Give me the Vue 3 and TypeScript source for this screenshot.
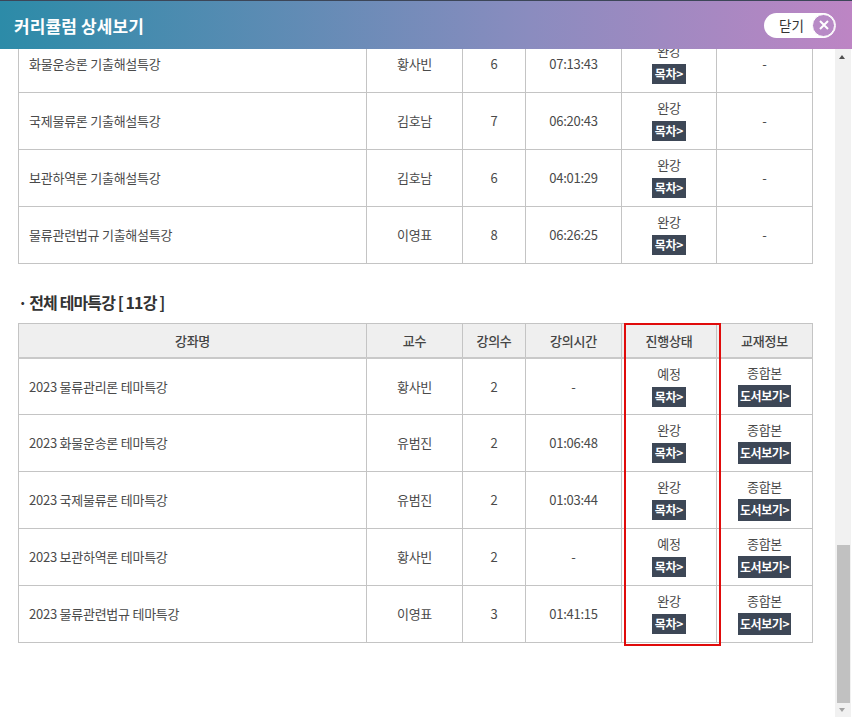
<script setup lang="ts">
interface Lecture {
  title: string
  teacher: string
  count: number
  time: string
  status: string
  book: boolean
}

const specials: Lecture[] = [
  { title: '화물운송론 기출해설특강', teacher: '황사빈', count: 6, time: '07:13:43', status: '완강', book: false },
  { title: '국제물류론 기출해설특강', teacher: '김호남', count: 7, time: '06:20:43', status: '완강', book: false },
  { title: '보관하역론 기출해설특강', teacher: '김호남', count: 6, time: '04:01:29', status: '완강', book: false },
  { title: '물류관련법규 기출해설특강', teacher: '이영표', count: 8, time: '06:26:25', status: '완강', book: false }
]

const themes: Lecture[] = [
  { title: '2023 물류관리론 테마특강', teacher: '황사빈', count: 2, time: '-', status: '예정', book: true },
  { title: '2023 화물운송론 테마특강', teacher: '유범진', count: 2, time: '01:06:48', status: '완강', book: true },
  { title: '2023 국제물류론 테마특강', teacher: '유범진', count: 2, time: '01:03:44', status: '완강', book: true },
  { title: '2023 보관하역론 테마특강', teacher: '황사빈', count: 2, time: '-', status: '예정', book: true },
  { title: '2023 물류관련법규 테마특강', teacher: '이영표', count: 3, time: '01:41:15', status: '완강', book: true }
]

const headers = ['강좌명', '교수', '강의수', '강의시간', '진행상태', '교재정보']
</script>

<template>
  <div class="popup">
    <header class="top">
      <h1>커리큘럼 상세보기</h1>
      <button class="close">
        <span>닫기</span>
        <i class="close-x">
          <svg width="12" height="12" viewBox="0 0 12 12">
            <path d="M2 2l8 8M10 2l-8 8" stroke="#fff" stroke-width="2" fill="none" />
          </svg>
        </i>
      </button>
    </header>

    <main class="body">
      <table class="list first">
        <colgroup>
          <col class="c1" /><col class="c2" /><col class="c3" /><col class="c4" /><col class="c5" /><col class="c6" />
        </colgroup>
        <tbody>
          <tr v-for="row in specials" :key="row.title">
            <td class="title">{{ row.title }}</td>
            <td>{{ row.teacher }}</td>
            <td>{{ row.count }}</td>
            <td>{{ row.time }}</td>
            <td class="stack">
              <div class="status">{{ row.status }}</div>
              <a class="tag">목차&gt;</a>
            </td>
            <td>-</td>
          </tr>
        </tbody>
      </table>

      <h2>· 전체 테마특강 [ 11강 ]</h2>

      <table class="list second">
        <colgroup>
          <col class="c1" /><col class="c2" /><col class="c3" /><col class="c4" /><col class="c5" /><col class="c6" />
        </colgroup>
        <thead>
          <tr>
            <th v-for="h in headers" :key="h">{{ h }}</th>
          </tr>
        </thead>
        <tbody>
          <tr v-for="row in themes" :key="row.title">
            <td class="title">{{ row.title }}</td>
            <td>{{ row.teacher }}</td>
            <td>{{ row.count }}</td>
            <td>{{ row.time }}</td>
            <td class="stack">
              <div class="status">{{ row.status }}</div>
              <a class="tag">목차&gt;</a>
            </td>
            <td class="stack">
              <div class="status">종합본</div>
              <a class="tag book">도서보기&gt;</a>
            </td>
          </tr>
        </tbody>
      </table>

      <div class="highlight"></div>

      <div class="scrollbar">
        <span class="arrow up"></span>
        <div class="track"><div class="thumb"></div></div>
        <span class="arrow down"></span>
      </div>
    </main>
  </div>
</template>

<style>
html,
body {
  margin: 0;
  background: #fff;
}
</style>

<style scoped>
.popup {
  width: 852px;
  height: 724px;
  display: flex;
  flex-direction: column;
  overflow: hidden;
  font-family: "Noto Sans CJK KR", "Noto Sans", sans-serif;
  color: #4a4a4a;
}

.top {
  height: 49px;
  box-sizing: border-box;
  flex: none;
  display: flex;
  align-items: center;
  justify-content: space-between;
  padding: 0 17px 0 14px;
  border-top: 1px solid #3c4658;
  background: linear-gradient(90deg, #2c8ba8 0%, #8a8cbf 62%, #bd85c4 100%);
}

.top h1 {
  margin: 0;
  font-size: 17px;
  font-weight: 700;
  color: #fff;
  letter-spacing: 0.1px;
}

.close {
  width: 71px;
  height: 25px;
  padding: 0 0 0 15px;
  box-sizing: border-box;
  display: flex;
  align-items: center;
  justify-content: space-between;
  border: 0;
  border-radius: 13px;
  background: #fff;
  font: inherit;
  font-size: 13.5px;
  color: #333;
}

.close-x {
  width: 23px;
  height: 23px;
  box-sizing: border-box;
  display: flex;
  align-items: center;
  justify-content: center;
  border-radius: 50%;
  border: 1px solid #fff;
  outline: 1px solid #fff;
  background: #b88ac6;
}

.body {
  position: relative;
  flex: 1;
  overflow: hidden;
  padding: 0 0 0 18px;
}

.list {
  width: 794px;
  table-layout: fixed;
  border-collapse: collapse;
  font-size: 13px;
  letter-spacing: -0.25px;
}

.list.first {
  margin-top: -14px;
}

.c1 { width: 348px; }
.c2 { width: 96px; }
.c3 { width: 63px; }
.c4 { width: 96px; }
.c5 { width: 95px; }
.c6 { width: 96px; }

.list td,
.list th {
  border: 1px solid #c4c4c4;
  text-align: center;
  padding: 0;
}

.list td {
  height: 56px;
  line-height: 18px;
}

.list td.stack {
  padding-bottom: 2px;
  box-sizing: border-box;
}

.list.second tbody tr:first-child td {
  height: 55px;
}

.list th {
  height: 33px;
  background: #efefef;
  font-weight: 500;
  color: #444;
  border-bottom: 2px solid #c9c9c9;
}

.list td.title {
  text-align: left;
  padding-left: 10px;
}

.status {
  margin-bottom: 4px;
}

.tag {
  display: inline-block;
  height: 20px;
  line-height: 20px;
  padding: 0 3px;
  background: #3d4756;
  color: #fff;
  font-size: 12px;
  font-weight: 700;
  letter-spacing: -0.3px;
  vertical-align: top;
}

.tag.book {
  height: 22px;
  line-height: 22px;
  margin-top: -1px;
  padding: 0 2px;
  letter-spacing: -0.4px;
}

h2 {
  margin: 27px 0 10px;
  height: 22px;
  line-height: 22px;
  font-size: 16px;
  font-weight: 700;
  color: #333;
  letter-spacing: -0.9px;
}

.highlight {
  position: absolute;
  left: 624px;
  top: 274px;
  width: 97px;
  height: 323px;
  box-sizing: border-box;
  border: 2px solid #e00b0b;
}

.scrollbar {
  position: absolute;
  left: 835px;
  top: 0;
  height: 668px;
  width: 16px;
  display: flex;
  flex-direction: column;
  background: #f1f1f1;
}

.arrow {
  height: 16px;
  flex: none;
  position: relative;
}

.arrow.down {
  height: 14px;
}

.arrow::after {
  content: "";
  position: absolute;
  left: 4px;
  border-left: 3.5px solid transparent;
  border-right: 3.5px solid transparent;
}

.arrow.up::after {
  top: 6px;
  border-bottom: 4px solid #505050;
}

.arrow.down::after {
  top: 5px;
  border-top: 4px solid #a3a3a3;
}

.track {
  flex: 1;
  display: flex;
  flex-direction: column;
  justify-content: flex-end;
}

.thumb {
  height: 158px;
  margin: 0 1px 0 2px;
  background: #c1c1c1;
}
</style>
